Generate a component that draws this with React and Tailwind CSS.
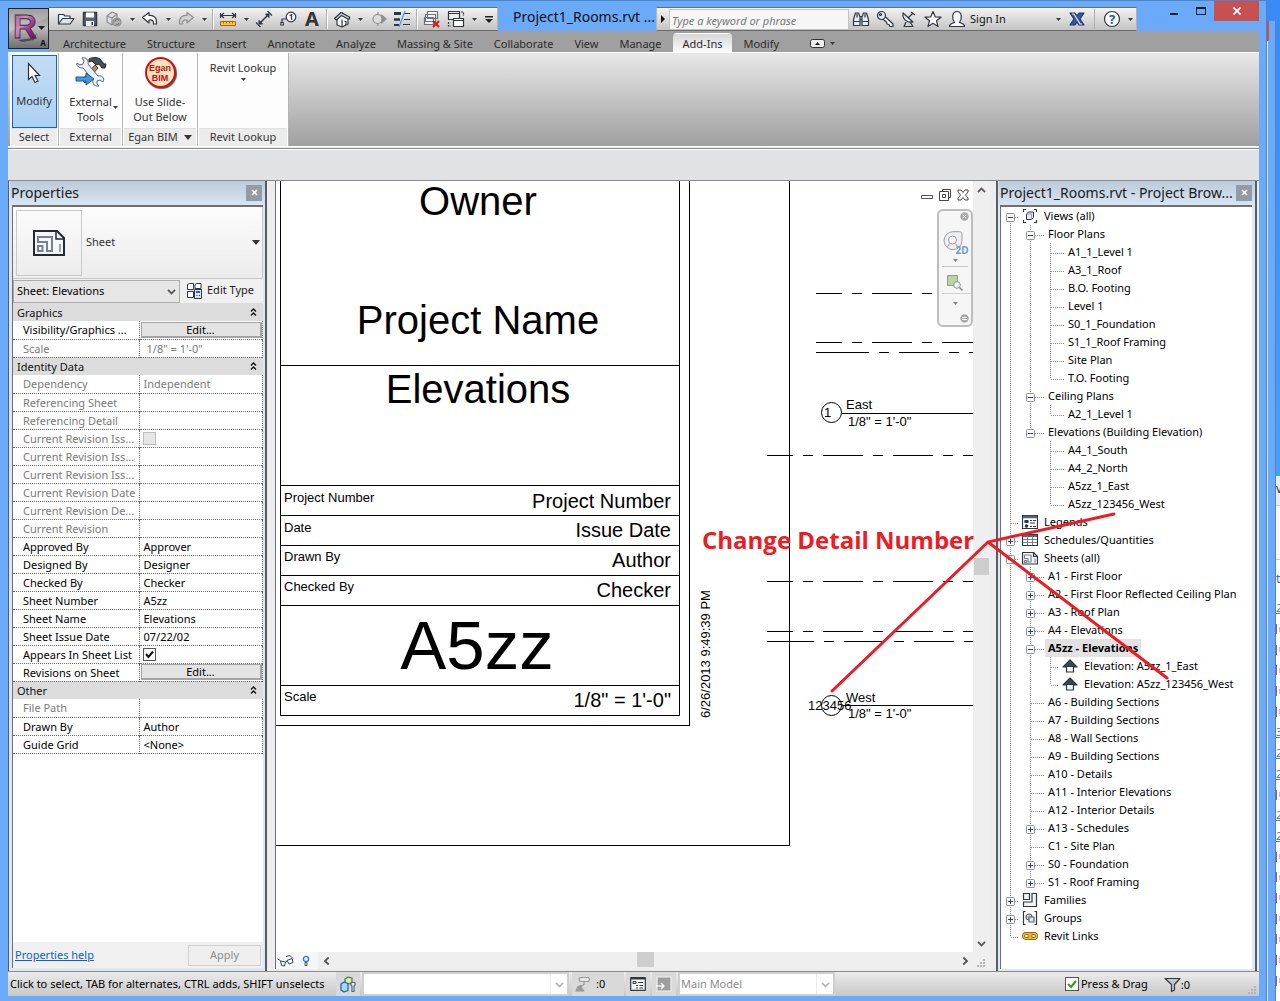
import React, { useState } from 'react';
import clsx from 'clsx';

const TABS = ['Architecture', 'Structure', 'Insert', 'Annotate', 'Analyze', 'Massing & Site', 'Collaborate', 'View', 'Manage', 'Add-Ins', 'Modify'];

const PROPERTY_GROUPS = [
  {
    name: 'Graphics',
    rows: [
      { label: 'Visibility/Graphics ...', type: 'button' },
      { label: 'Scale', value: '1/8" = 1\'-0"', muted: true, indent: true },
    ],
  },
  {
    name: 'Identity Data',
    rows: [
      { label: 'Dependency', value: 'Independent', muted: true },
      { label: 'Referencing Sheet', muted: true },
      { label: 'Referencing Detail', muted: true },
      { label: 'Current Revision Iss...', type: 'checkbox', muted: true },
      { label: 'Current Revision Iss...', muted: true },
      { label: 'Current Revision Iss...', muted: true },
      { label: 'Current Revision Date', muted: true },
      { label: 'Current Revision De...', muted: true },
      { label: 'Current Revision', muted: true },
      { label: 'Approved By', value: 'Approver' },
      { label: 'Designed By', value: 'Designer' },
      { label: 'Checked By', value: 'Checker' },
      { label: 'Sheet Number', value: 'A5zz' },
      { label: 'Sheet Name', value: 'Elevations' },
      { label: 'Sheet Issue Date', value: '07/22/02' },
      { label: 'Appears In Sheet List', type: 'checkbox', checked: true },
      { label: 'Revisions on Sheet', type: 'button' },
    ],
  },
  {
    name: 'Other',
    rows: [
      { label: 'File Path', muted: true },
      { label: 'Drawn By', value: 'Author' },
      { label: 'Guide Grid', value: '<None>' },
    ],
  },
];

const leaf = (label) => ({ label });
const closed = (label) => ({ label, box: '+' });

const TREE = [
  {
    label: 'Views (all)', icon: 'views', box: '-',
    children: [
      {
        label: 'Floor Plans', box: '-',
        children: ['A1_1_Level 1', 'A3_1_Roof', 'B.O. Footing', 'Level 1', 'S0_1_Foundation', 'S1_1_Roof Framing', 'Site Plan', 'T.O. Footing'].map(leaf),
      },
      { label: 'Ceiling Plans', box: '-', children: [leaf('A2_1_Level 1')] },
      {
        label: 'Elevations (Building Elevation)', box: '-',
        children: ['A4_1_South', 'A4_2_North', 'A5zz_1_East', 'A5zz_123456_West'].map(leaf),
      },
    ],
  },
  { label: 'Legends', icon: 'legend' },
  { label: 'Schedules/Quantities', icon: 'schedule', box: '+' },
  {
    label: 'Sheets (all)', icon: 'sheet', box: '-',
    children: [
      closed('A1 - First Floor'),
      closed('A2 - First Floor Reflected Ceiling Plan'),
      closed('A3 - Roof Plan'),
      closed('A4 - Elevations'),
      {
        label: 'A5zz - Elevations', box: '-', active: true,
        children: [
          { label: 'Elevation: A5zz_1_East', icon: 'elevation' },
          { label: 'Elevation: A5zz_123456_West', icon: 'elevation' },
        ],
      },
      leaf('A6 - Building Sections'),
      leaf('A7 - Building Sections'),
      leaf('A8 - Wall Sections'),
      leaf('A9 - Building Sections'),
      leaf('A10 - Details'),
      leaf('A11 - Interior Elevations'),
      leaf('A12 - Interior Details'),
      closed('A13 - Schedules'),
      leaf('C1 - Site Plan'),
      closed('S0 - Foundation'),
      closed('S1 - Roof Framing'),
    ],
  },
  { label: 'Families', icon: 'family', box: '+' },
  { label: 'Groups', icon: 'group', box: '+' },
  { label: 'Revit Links', icon: 'link' },
];

/* ---------- icons ---------- */

const DARK = '#2f3740';

function Icon({ size = 18, box = 18, children, className }) {
  return (
    <svg width={size} height={size} viewBox={`0 0 ${box} ${box}`} fill="none" stroke={DARK} strokeWidth="1.2" strokeLinejoin="round" className={clsx('block shrink-0', className)} aria-hidden="true">
      {children}
    </svg>
  );
}

const OpenIcon = () => (
  <Icon>
    <path d="M1.500 14V4.500h5l1.500 1.500h5v2.500" fill="#f5f7fa" />
    <path d="M1.500 14l4-5.500h11.500l-4 5.500z" fill="#dfe4ea" />
  </Icon>
);
const SaveIcon = () => (
  <Icon>
    <path d="M2.500 2.500h13v13h-13z" fill="#59636f" strokeWidth="1.500" />
    <path d="M5 2.500h8v5h-8z" fill="#fff" stroke="none" />
    <path d="M5 11h8v5h-8z" fill="#eef1f4" stroke="none" />
    <path d="M10.500 12h1.500v3h-1.500z" fill={DARK} stroke="none" />
  </Icon>
);
const SyncIcon = () => (
  <Icon>
    <g stroke="#8a8d90">
      <path d="M2 6l5-4 5 2v7l-5 4-5-3zM2 6l5 2 5-4M7 8v7" fill="#dcdcdc" />
      <circle cx="12" cy="12" r="4" fill="#b4b4b4" />
      <path d="M10 12a2 2 0 0 1 4-1M14 13a2 2 0 0 1-3 1" stroke="#777" />
    </g>
  </Icon>
);
const UndoIcon = () => (
  <Icon><path d="M1.500 7.500L8 2.500v3c5-.5 8 2 7.500 8.500h-3c.5-3-1-4.500-4.500-4v3z" fill="#fff" /></Icon>
);
const RedoIcon = () => (
  <Icon><path d="M16.500 7.500L10 2.500v3C5 5 2 7.500 2.500 14h3c-.5-3 1-4.500 4.500-4v3z" fill="#d4d4d4" stroke="#8e8e8e" /></Icon>
);
const MeasureIcon = () => (
  <Icon>
    <path d="M2 5.500h14M5 3L2 5.500 5 8M13 3l3 2.500L13 8M1.500 3v5M16.500 3v5" />
    <path d="M1.500 11.500h15v4h-15z" fill="#ffc73c" stroke="#a56b00" strokeWidth="1" />
    <path d="M4.500 11.500v2M7.500 11.500v2M10.500 11.500v2M13.500 11.500v2" stroke="#a56b00" strokeWidth="1" />
  </Icon>
);
const DimensionIcon = () => (
  <Icon>
    <path d="M5 13L13 5" strokeWidth="1.500" />
    <path d="M4 10.500V14h3.500zM14 7.500V4h-3.500z" fill={DARK} strokeWidth="1" />
    <path d="M1 12.500l4.500 4.500M12.500 1l4.500 4.500" />
  </Icon>
);
const TagIcon = () => (
  <Icon>
    <circle cx="12" cy="7" r="4.800" fill="#fff" />
    <path d="M7 9H3v5" />
    <path d="M1.800 12.500h2.500V15H1.800z" fill="#fff" />
    <text x="12" y="10" fontSize="8" fontWeight="700" textAnchor="middle" fill={DARK} stroke="none">1</text>
  </Icon>
);
const HouseIcon = () => (
  <Icon>
    <path d="M4 8v7l5 2 6-3V8L9.500 3z" fill="#fff" />
    <path d="M1.500 8.500L8 2.500l8.500 4.500v2L14 8.500 8.500 5.500 3.500 10z" fill="#c9d2dc" />
    <path d="M9 9.500v7.500M11.500 11.500h1.500v3.500" />
  </Icon>
);
const SectionIcon = () => (
  <Icon>
    <path d="M9 2v14M12.500 5l4.500 4-4.500 4z" fill="#8e8e8e" stroke="#8e8e8e" />
    <circle cx="8.500" cy="9" r="4.500" fill="#ddd" stroke="#8e8e8e" />
  </Icon>
);
const ThinLinesIcon = () => (
  <Icon>
    <path d="M1 3.500h7" strokeWidth="3" />
    <path d="M1 9.500h6" strokeWidth="2.500" />
    <path d="M1 15h5" strokeWidth="2" />
    <path d="M11 3.500h6M11 9.500h6M10 14.500h7" />
    <path d="M12 1L6 17" stroke="#3a9be8" />
  </Icon>
);
const CloseHiddenIcon = () => (
  <Icon>
    <path d="M4.500 1.500h10v7h-10zM2.500 4.500h10v7h-10zM1.500 7.500h9v7h-9z" fill="#f6f6f6" stroke="#6b7178" />
    <path d="M10 11l6 6M16 11l-6 6" stroke="#d01818" strokeWidth="2" />
  </Icon>
);
const SwitchIcon = () => (
  <Icon>
    <path d="M1.500 1.500h11v8h-11zM1.500 3.500h11" fill="#eee" />
    <path d="M6.500 8.500h10v8h-10zM6.500 10.500h10" fill="#fff" />
    <path d="M14 2h2.500v4M1.500 12v4H4" strokeDasharray="2 1" />
  </Icon>
);
const BinocularsIcon = () => (
  <Icon>
    <path d="M1.500 9.500L3.500 3h3L8 7v8.500H1.500zM16.500 9.500L14.500 3h-3L10 7v8.500h6.500z" fill="#e8ecf0" />
    <path d="M8 6.500h2M8 9.500h2M2 11.500h6M10 11.500h6M5 3.500v4M13 3.500v4" />
  </Icon>
);
const KeyIcon = () => (
  <Icon>
    <path d="M8.500 6L17 14v2.500h-3l-1-2-2-.5-.5-2L6 8.500" fill="#fff" />
    <circle cx="5.500" cy="5.500" r="4" fill="#e4e8ec" />
    <circle cx="4.500" cy="4.500" r="1" />
  </Icon>
);
const DishIcon = () => (
  <Icon>
    <path d="M3 3c-1 6 4 10 10 9z" fill="#e8ecf0" />
    <path d="M8 8l5-5M11 2l4 3M6 12l-2 4.500h9L10 12" />
  </Icon>
);
const StarIcon = () => (
  <Icon><path d="M9 1.500l2.200 5.300 5.800.4-4.500 3.600 1.500 5.700-5-3.200-5 3.200 1.500-5.700L1 7.200l5.800-.4z" fill="#fff" /></Icon>
);
const UserIcon = () => (
  <Icon>
    <path d="M1.500 16.500c0-3 2.500-3 5-4-3-4-2.500-11 2.500-11s5.500 7 2.500 11c2.500 1 5 1 5 4z" fill="#f4f6f8" />
  </Icon>
);
const ExchangeIcon = () => (
  <Icon>
    <path d="M2 3h5l2 3 2-3h5l-4 6 4 6h-5l-2-3-2 3H2l4-6z" fill="#3558a8" stroke="#1e3568" />
    <path d="M4 4h2l6 10h2" stroke="#e8eefb" />
  </Icon>
);
const HelpIcon = () => (
  <Icon>
    <circle cx="9" cy="9" r="7.500" fill="#fff" />
    <text x="9" y="14" fontSize="13" fontWeight="700" textAnchor="middle" fill="#1c55b8" stroke="none">?</text>
  </Icon>
);
const Caret = ({ className }) => (
  <svg width="5" height="3" viewBox="0 0 5 3" className={clsx('block shrink-0', className)} aria-hidden="true"><path d="M0 0h5L2.500 3z" fill="#3b3b3b" /></svg>
);
const Chevron = ({ className, color = '#555' }) => (
  <svg width="9" height="6" viewBox="0 0 9 6" fill="none" className={clsx('block shrink-0', className)} aria-hidden="true"><path d="M1 .8l3.500 3.700L8 .8" stroke={color} strokeWidth="1.800" /></svg>
);
const CloseX = () => (
  <svg width="7" height="7" viewBox="0 0 7 7" aria-hidden="true"><path d="M1 1l5 5M6 1L1 6" stroke="#fff" strokeWidth="1.600" /></svg>
);

const TREE_ICONS = {
  views: (
    <Icon size={16} box={16}>
      <path d="M4 1.500H1.500V4M12 1.500h2.500V4M4 14.500H1.500V12M12 14.500h2.500V12" />
      <path d="M4.500 6l2-2h5v5.500l-2 2h-5z" fill="#e4e8ee" strokeWidth="1" />
      <path d="M4.500 6h5v5.500" stroke="#9aa4af" strokeWidth="1" />
    </Icon>
  ),
  legend: (
    <Icon size={16} box={16}>
      <path d="M.5 1.500h15v13H.5z" fill="#fff" />
      <path d="M1 3h14" strokeWidth="2.500" stroke="#59636f" />
      <path d="M3 6.500h3v2H3z" fill={DARK} />
      <path d="M8 6.500h2M11 6.500h3M8 9h5M8 12.500h2M11 12.500h3" />
      <circle cx="4.500" cy="12" r="1.200" fill={DARK} />
    </Icon>
  ),
  schedule: (
    <Icon size={16} box={16}>
      <path d="M.5 2.500h15v11H.5z" fill="#fff" />
      <path d="M1 4h14" strokeWidth="2" stroke="#59636f" />
      <path d="M1 7.500h14M1 10.500h14M5.500 4v9M10.500 4v9" strokeWidth="1" stroke="#7b8592" />
    </Icon>
  ),
  sheet: (
    <Icon size={16} box={16}>
      <path d="M.5 2.500h11l4 4v7.500H.5z" fill="#f4f6f8" />
      <path d="M11.500 2.500v4h4" />
      <path d="M2.500 5h6.500v7H6V8.500H2.500zM2.500 10.500h2v2h-2zM13 8.500v4" stroke="#7b8592" />
    </Icon>
  ),
  elevation: (
    <Icon size={16} box={16}>
      <path d="M8 2L1 9h14z" fill="#3d4650" />
      <path d="M4.500 8.500h7v5.500h-7z" fill="#f2f4f6" />
    </Icon>
  ),
  family: (
    <Icon size={16} box={16}>
      <path d="M1.500 1.500h6v6h-6zM10 1.500h4.500v13h-13V10H10z" fill="#f0f2f5" />
    </Icon>
  ),
  group: (
    <Icon size={16} box={16}>
      <path d="M3.500 1.500h-2v13h2M12.500 1.500h2v13h-2" />
      <circle cx="7" cy="7" r="3" fill="#c7ced8" stroke="#59636f" />
      <path d="M7 7h5v5H7z" fill="#e4e8ee" stroke="#59636f" />
    </Icon>
  ),
  link: (
    <Icon size={16} box={16}>
      <rect x="1.500" y="5.500" width="7.500" height="5" rx="2.500" stroke="#7a5200" strokeWidth="2.800" />
      <rect x="7" y="5.500" width="7.500" height="5" rx="2.500" stroke="#7a5200" strokeWidth="2.800" />
      <rect x="1.500" y="5.500" width="7.500" height="5" rx="2.500" stroke="#f6bb2e" strokeWidth="1.400" />
      <rect x="7" y="5.500" width="7.500" height="5" rx="2.500" stroke="#f6bb2e" strokeWidth="1.400" />
    </Icon>
  ),
};

/* ---------- header ---------- */

function BarButton({ label, children }) {
  return (
    <button type="button" aria-label={label} className="flex h-full w-6 shrink-0 items-center justify-center">
      {children}
    </button>
  );
}

function DropButton({ label }) {
  return (
    <button type="button" aria-label={label} className="flex h-full w-3 shrink-0 items-center justify-center">
      <Caret />
    </button>
  );
}

const Separator = () => <div className="mx-[2px] box-content h-5 w-px shrink-0 border-r border-r-white bg-[#b0b0b0]" />;

function QuickAccess() {
  return (
    <div className="flex h-6 items-center border border-l-0 border-[#6b6b6b] border-r-[#b5b5b5] bg-gradient-to-b from-[#f3f3f3] to-[#c4c4c4] pl-[5px]">
      <BarButton label="Open"><OpenIcon /></BarButton>
      <BarButton label="Save"><SaveIcon /></BarButton>
      <BarButton label="Synchronize"><SyncIcon /></BarButton>
      <DropButton label="Synchronize options" />
      <BarButton label="Undo"><UndoIcon /></BarButton>
      <DropButton label="Undo list" />
      <BarButton label="Redo"><RedoIcon /></BarButton>
      <DropButton label="Redo list" />
      <Separator />
      <BarButton label="Measure"><MeasureIcon /></BarButton>
      <DropButton label="Measure options" />
      <BarButton label="Aligned dimension"><DimensionIcon /></BarButton>
      <BarButton label="Tag by category"><TagIcon /></BarButton>
      <button type="button" className="h-full w-6 text-center text-[20px] leading-[22px] font-bold text-[#333]">A</button>
      <Separator />
      <BarButton label="3D view"><HouseIcon /></BarButton>
      <DropButton label="3D options" />
      <BarButton label="Section"><SectionIcon /></BarButton>
      <BarButton label="Thin lines"><ThinLinesIcon /></BarButton>
      <Separator />
      <BarButton label="Close hidden windows"><CloseHiddenIcon /></BarButton>
      <BarButton label="Switch windows"><SwitchIcon /></BarButton>
      <DropButton label="Window list" />
      <button type="button" aria-label="Customize" className="flex h-full w-[17px] items-center justify-center">
        <svg width="8" height="7" viewBox="0 0 8 7" aria-hidden="true"><path d="M0 0h8v1.500H0zM0 3h8L4 7z" fill="#222" /></svg>
      </button>
    </div>
  );
}

function InfoCenter() {
  return (
    <div className="flex h-6 shrink-0 items-center border border-[#6b6b6b] border-r-[#b5b5b5] border-l-[#b5b5b5] bg-gradient-to-b from-[#f3f3f3] to-[#c4c4c4]">
      <button type="button" aria-label="Toggle search" className="flex h-full w-3 items-center justify-center">
        <svg width="4" height="8" viewBox="0 0 4 8" aria-hidden="true"><path d="M0 0l4 4-4 4z" fill="#111" /></svg>
      </button>
      <input
        type="text"
        aria-label="Search"
        placeholder="Type a keyword or phrase"
        className="h-[21px] w-[180px] border border-[#c3c3c3] bg-[#f6f6f6] px-[2px] pt-[2px] text-[11px] text-black placeholder:text-[#777] placeholder:italic focus:outline-none"
      />
      <BarButton label="Find"><BinocularsIcon /></BarButton>
      <BarButton label="Subscription"><KeyIcon /></BarButton>
      <BarButton label="Communication"><DishIcon /></BarButton>
      <BarButton label="Favorites"><StarIcon /></BarButton>
      <BarButton label="Account"><UserIcon /></BarButton>
      <button type="button" className="flex h-full w-24 items-center justify-between pr-1 pl-px text-left text-[11px] text-[#111]">
        Sign In
        <Caret />
      </button>
      <BarButton label="Exchange apps"><ExchangeIcon /></BarButton>
      <div className="mx-[5px] h-5 w-px bg-[#b0b0b0]" />
      <BarButton label="Help"><HelpIcon /></BarButton>
      <DropButton label="Help options" />
    </div>
  );
}

function WindowButtons() {
  return (
    <div className="ml-auto flex h-5 shrink-0 self-start">
      <button type="button" aria-label="Minimize" className="flex w-[26px] items-center justify-center">
        <span className="mt-[5px] h-[2px] w-2 bg-[#222]" />
      </button>
      <button type="button" aria-label="Maximize" className="flex w-[27px] items-center justify-center">
        <span className="h-2 w-[10px] border border-t-2 border-[#222]" />
      </button>
      <button type="button" aria-label="Close" className="flex w-[45px] items-center justify-center bg-[#c75050]">
        <svg width="8" height="8" viewBox="0 0 8 8" aria-hidden="true"><path d="M.5.5l7 7M7.500.5l-7 7" stroke="#fff" strokeWidth="1.700" /></svg>
      </button>
    </div>
  );
}

function AppButton() {
  return (
    <button type="button" aria-label="Application menu" className="mt-[7px] h-[41px] w-[41px] shrink-0 border border-[#222] bg-gradient-to-b from-[#8a8a8a] via-[#b9b9b9] to-[#6e6e6e]">
      <svg width="39" height="39" viewBox="0 0 39 39" aria-hidden="true">
        <defs>
          <linearGradient id="logo" x1="0" y1="0" x2="1" y2="1">
            <stop offset="0" stopColor="#8d5a88" />
            <stop offset=".4" stopColor="#c88fc2" />
            <stop offset=".65" stopColor="#8a2f82" />
            <stop offset="1" stopColor="#4c0a46" />
          </linearGradient>
        </defs>
        <path d="M0 39V24C12 12 26 16 39 8V0H0z" fill="#fff" opacity=".18" />
        <path d="M9 31l15-2 4-5-3 7-12 2z" fill="#2c1a2a" opacity=".6" />
        <text x="4" y="29" fontSize="33" fontWeight="700" fontFamily="Liberation Sans, Arial, sans-serif" fill="url(#logo)" stroke="#4f1f49" strokeWidth=".8">R</text>
        <path d="M29 17h7l-3.500 4z" fill="#1c2530" />
        <text x="34" y="37" fontSize="8" fontWeight="700" textAnchor="middle" fill="#111">A</text>
      </svg>
    </button>
  );
}

function Header() {
  return (
    <header className="flex">
      <AppButton />
      <div className="min-w-0 flex-1">
        <div className="flex h-[30px]">
          <div className="flex shrink-0 items-end"><QuickAccess /></div>
          <h1 className="w-[158px] shrink-0 self-end pb-[4px] pl-[14px] text-center text-[14px] leading-5 whitespace-nowrap text-[#111]">Project1_Rooms.rvt ...</h1>
          <div className="flex items-end"><InfoCenter /></div>
          <WindowButtons />
        </div>
        <nav className="flex h-[21px] items-end gap-px bg-[#a0a0a0] pl-1">
          {TABS.map((tab) => (
            <button
              key={tab}
              type="button"
              className={clsx(
                'h-[18px] px-[10px] text-[11px] leading-[17px] whitespace-nowrap text-[#2b2b2b]',
                tab === 'Add-Ins' && 'rounded-t-sm bg-gradient-to-b from-[#d8d8d8] to-[#fbfbfb] shadow-[0_-1px_0_#fff]'
              )}
            >
              {tab}
            </button>
          ))}
          <button type="button" aria-label="Ribbon display" className="ml-5 flex h-[17px] items-center gap-[5px]">
            <svg width="15" height="9" viewBox="0 0 15 9" aria-hidden="true">
              <rect x=".5" y=".5" width="14" height="8" rx="2" fill="#eee" stroke="#333" />
              <path d="M5 6h5L7.500 3z" fill="#222" />
            </svg>
            <Caret />
          </button>
        </nav>
      </div>
    </header>
  );
}

/* ---------- ribbon ---------- */

function RibbonPanel({ title, width, more, children }) {
  return (
    <section className={clsx('flex flex-col border-r border-[#b4b4b4] bg-[#fdfdfd] px-px', width)}>
      <div className="flex flex-1 justify-center pt-[2px]">{children}</div>
      <div className="flex h-[18px] items-center justify-center gap-[6px] border-t border-[#e0e0e0] bg-[#ececec] text-[11px] whitespace-nowrap text-[#333]">
        {title}
        {more && <svg width="8" height="5" viewBox="0 0 8 5" aria-hidden="true"><path d="M0 0h8L4 5z" fill="#333" /></svg>}
      </div>
    </section>
  );
}

function Ribbon() {
  return (
    <div className="bg-white">
      <div className="flex h-[94px] border-t border-white bg-gradient-to-b from-[#e8e8e8] to-[#a0a0a0] pl-[2px]">
        <RibbonPanel title="Select" width="w-[49px]">
          <button type="button" className="flex h-[73px] w-[45px] flex-col items-center border border-[#1565c0] bg-gradient-to-b from-[#c3dbf3] to-[#acd2f4] text-[11px] text-[#333]">
            <svg width="16" height="22" viewBox="0 0 16 22" className="mt-[6px]" aria-hidden="true">
              <path d="M2.500 1.500v16l3.500-3 3 6 3-1.500-3-5.500h4.500z" fill="#fff" stroke="#333" strokeWidth="1.200" />
            </svg>
            <span className="mt-[9px] leading-4">Modify</span>
          </button>
        </RibbonPanel>
        <RibbonPanel title="External" width="w-[64px]">
          <button type="button" className="relative flex w-full flex-col items-center text-[11px] leading-[15px] text-[#333]">
            <svg width="32" height="32" viewBox="0 0 32 32" className="mt-px" aria-hidden="true">
              <path d="M7 24L20 9l3 3L10 27z" fill="#b58a7c" stroke="#5b3a30" />
              <path d="M14 3c4-2 8-2 11 0l4 5 2 0-1 4-3 0-3-4-3 1-4-4-3 1z" fill="#4a4f55" stroke="#22262b" />
              <path d="M2 7l3 2 3-1 1-3-2-3c4-1 7 2 6 6l10 12c4-1 7 2 5 6l-3-2-3 1 0 3 2 2c-4 1-7-2-6-6L8 12c-4 0-7-2-6-5z" fill="#eef2f5" stroke="#59636f" />
              <path d="M1 21h10v-4l8 6-8 6v-4H1z" fill="#3f98e0" stroke="#1c5c9c" />
            </svg>
            <span className="mt-[6px]">External</span>
            <span>Tools</span>
            <Caret className="absolute right-[3px] bottom-[19px]" />
          </button>
        </RibbonPanel>
        <RibbonPanel title="Egan BIM" width="w-[75px]" more>
          <button type="button" className="flex flex-col items-center text-[11px] leading-[15px] text-[#333]">
            <span className="mt-[2px] flex h-[31px] w-[31px] flex-col items-center justify-center rounded-full border-2 border-[#cc1414] bg-[#fde3c0] font-['Liberation_Sans',sans-serif] text-[9px] leading-[10px] font-bold text-[#c00f0f] shadow-[1px_1px_1px_#555]">
              <span>Egan</span>
              <span>BIM</span>
            </span>
            <span className="mt-[6px]">Use Slide-</span>
            <span>Out Below</span>
          </button>
        </RibbonPanel>
        <RibbonPanel title="Revit Lookup" width="w-[91px]">
          <button type="button" className="flex flex-col items-center self-start pt-[5px] text-[11px] leading-[15px] text-[#333]">
            Revit Lookup
            <Caret className="mt-[3px]" />
          </button>
        </RibbonPanel>
      </div>
      <div className="mt-px h-[2px] border-b border-[#8e8e8e] bg-[#e8e8e8]" />
      <div className="mt-px h-[31px] border-b border-[#8a8a8a] bg-[#e0e2e4]" />
    </div>
  );
}

/* ---------- side panels ---------- */

function PanelTitle({ children }) {
  return (
    <div className="flex h-6 items-center justify-between bg-gradient-to-b from-[#bccbda] to-[#d8e5f3] pr-[3px] pl-px">
      <h2 className="text-[14px] leading-6 whitespace-nowrap text-[#1b1b1b]">{children}</h2>
      <button type="button" aria-label="Close panel" className="mb-px flex h-4 w-4 shrink-0 items-center justify-center bg-[#919ba6]"><CloseX /></button>
    </div>
  );
}

function PropertyRow({ row }) {
  const [checked, setChecked] = useState(!!row.checked);
  const tone = row.muted ? 'text-[#7b7b7b]' : 'text-black';
  return (
    <tr className="h-[18px] border-b border-dotted border-[#6d6d6d]">
      <th scope="row" className={clsx('overflow-hidden border-r border-dotted border-[#6d6d6d] p-0 pl-[10px] text-left font-normal whitespace-nowrap', tone)}>{row.label}</th>
      <td className={clsx('border-r border-dotted border-[#6d6d6d] p-0 whitespace-nowrap', tone, !row.type && (row.indent ? 'pl-[7px]' : 'pl-1'))}>
        {row.type === 'button' && (
          <button type="button" className="ml-px block h-4 w-[121px] border border-r-2 border-b-2 border-[#a3a3a3] bg-[#e3e3e3] text-center leading-[14px]">Edit...</button>
        )}
        {row.type === 'checkbox' && (
          <span className="relative ml-[3px] block h-[13px] w-[13px]">
            <input
              type="checkbox"
              aria-label={row.label}
              checked={checked}
              disabled={row.muted}
              onChange={(e) => setChecked(e.target.checked)}
              className="block h-[13px] w-[13px] appearance-none border border-[#555] bg-white disabled:border-[#bcbcbc] disabled:bg-[#e6e6e6]"
            />
            {checked && (
              <svg width="13" height="13" viewBox="0 0 13 13" className="pointer-events-none absolute inset-0" aria-hidden="true"><path d="M3 6l2.500 3L10 3.500" fill="none" stroke="#111" strokeWidth="2" /></svg>
            )}
          </span>
        )}
        {row.value}
      </td>
    </tr>
  );
}

function PropertiesPanel() {
  return (
    <aside className="flex w-[259px] shrink-0 flex-col border-r-2 border-l border-[#565d66] bg-[#dfe8f2] pb-[3px] pl-px">
      <PanelTitle>Properties</PanelTitle>
      <div className="mr-[2px] ml-[2px] flex flex-1 flex-col border-t-2 border-l border-[#6f6f6f] bg-[#f0f0f0]">
        <button type="button" className="flex h-[72px] items-center border-r border-b border-[#c8c8c8] bg-gradient-to-b from-[#fcfcfc] to-[#ececec] py-[2px] pr-[2px] pl-[3px] text-[11px] text-[#333]">
          <span className="flex h-[66px] w-[66px] items-center justify-center border border-[#c9c9c9]">
            <svg width="32" height="26" viewBox="0 0 32 26" fill="none" aria-hidden="true">
              <path d="M1 1h23l7 7v17H1z" fill="#f4f6f8" stroke="#222a33" strokeWidth="2" />
              <path d="M23 1v8h8" stroke="#222a33" strokeWidth="1.500" />
              <path d="M5 7h14v14h-5v-9H5zM5 16h4.500v5H5z" stroke="#76828f" strokeWidth="2" />
              <path d="M27 14v8" stroke="#9aa2ab" strokeWidth="2" />
            </svg>
          </span>
          <span className="ml-1">Sheet</span>
          <svg width="8" height="5" viewBox="0 0 8 5" className="ml-auto" aria-hidden="true"><path d="M0 0h8L4 5z" fill="#333" /></svg>
        </button>
        <div className="flex h-6 items-center">
          <label className="relative mt-px block">
            <select aria-label="Selection filter" className="block h-[23px] w-[167px] appearance-none border border-[#acacac] bg-[#e6e6e6] pl-[3px] text-[11px] text-black">
              <option>Sheet: Elevations</option>
            </select>
            <Chevron className="pointer-events-none absolute top-[9px] right-1" />
          </label>
          <button type="button" className="mb-[2px] ml-[6px] flex items-center gap-1 text-[11px] text-[#222]">
            <Icon size={17} box={17}>
              <path d="M1.500 2.500l2-1h4v6h-6zM9 2.500l2-1h4v5H9zM1.500 9.500h6v6h-6z" fill="#fff" strokeWidth="1" />
              <path d="M8.500 7.500h7v9h-7z" fill="#dfe6ee" strokeWidth="1" />
              <path d="M10 9h4v2h-4z" fill="#1c62b5" stroke="none" />
              <path d="M10.500 13.500h1M13 13.500h1" strokeWidth="1" />
            </Icon>
            Edit Type
          </button>
        </div>
        <div className="flex-1 bg-white">
          <table className="w-full table-fixed border-collapse text-[11px] leading-[15px]">
            <colgroup>
              <col className="w-[126px]" />
              <col />
            </colgroup>
            {PROPERTY_GROUPS.map((group) => (
              <tbody key={group.name}>
                <tr className="h-[18px] bg-[#dcdcdc]">
                  <th colSpan={2} className="p-0 pr-[6px] pl-1 text-left font-normal text-[#111]">
                    <span className="flex items-center justify-between">
                      {group.name}
                      <svg width="7" height="8" viewBox="0 0 7 8" fill="none" aria-hidden="true"><path d="M1 3.500L3.500 1 6 3.500M1 7.500L3.500 5 6 7.500" stroke="#111" strokeWidth="1.300" /></svg>
                    </span>
                  </th>
                </tr>
                {group.rows.map((row, i) => <PropertyRow key={i} row={row} />)}
              </tbody>
            ))}
          </table>
        </div>
        <div className="flex h-[26px] items-center justify-between pr-[2px] pl-[2px] text-[11px]">
          <a href="#help" className="text-[#0a62c9] underline">Properties help</a>
          <button type="button" disabled className="h-[21px] w-[73px] border border-[#d0d0d0] bg-[#efefef] text-[#8d8d8d]">Apply</button>
        </div>
      </div>
    </aside>
  );
}

// One row cell with the dotted branch line and the optional +/- box.
function Branch({ box, first, last, long }) {
  const width = long ? 25 : 20;
  return (
    <svg width={width} height="18" viewBox={`0 0 ${width} 18`} className="block shrink-0" fill="none" aria-hidden="true">
      <path d={`M9.500 ${first ? 10 : 0}V${last ? 10 : 18}`} stroke="#8f8f8f" strokeDasharray="1 1" />
      <path d={`M10 10.500H${width - 2}`} stroke="#8f8f8f" strokeDasharray="1 1" />
      {box && (
        <>
          <rect x="5.500" y="6.500" width="8" height="8" rx="1" fill="#fafafa" stroke="#919191" />
          <path d={box === '+' ? 'M7 10.500h5M9.500 8v5' : 'M7 10.500h5'} stroke="#2b3f8f" />
        </>
      )}
    </svg>
  );
}

function Guide({ line }) {
  return (
    <svg width="20" height="18" viewBox="0 0 20 18" className="block shrink-0" aria-hidden="true">
      {line && <path d="M9.500 0v18" stroke="#8f8f8f" strokeDasharray="1 1" />}
    </svg>
  );
}

function TreeNodes({ nodes, guides = [] }) {
  return (
    <ul>
      {nodes.map((node, i) => {
        const last = i === nodes.length - 1;
        return (
          <li key={node.label}>
            <div className="flex h-[18px] items-center">
              {guides.map((line, g) => <Guide key={g} line={line} />)}
              <Branch box={node.box} first={i === 0 && guides.length === 0} last={last} long={!node.icon} />
              {node.icon && <span className="ml-px">{TREE_ICONS[node.icon]}</span>}
              <span
                className={clsx(
                  'leading-[18px] whitespace-nowrap text-black',
                  node.icon ? 'ml-[6px]' : '-ml-px px-[3px]',
                  node.active && 'bg-[#e2e2e2] font-bold'
                )}
              >
                {node.label}
              </span>
            </div>
            {node.children && <TreeNodes nodes={node.children} guides={[...guides, !last]} />}
          </li>
        );
      })}
    </ul>
  );
}

function ProjectBrowser() {
  return (
    <aside className="mr-[2px] flex w-[261px] shrink-0 flex-col border-r-2 border-l-2 border-[#565d66] bg-[#dfe8f2] pb-[2px] pl-px">
      <PanelTitle>Project1_Rooms.rvt - Project Brow...</PanelTitle>
      <div className="mr-[3px] ml-px flex-1 overflow-hidden border-t-2 border-l border-[#6f6f6f] bg-white text-[11px]">
        <TreeNodes nodes={TREE} />
      </div>
    </aside>
  );
}

/* ---------- drawing area ---------- */

function SheetDrawing() {
  return (
    <svg className="absolute inset-0 h-full w-full" fontFamily="Liberation Sans, Arial, sans-serif" fill="#000">
      <g transform="translate(-276 -181)">
        <g fill="none" stroke="#000" shapeRendering="crispEdges">
          <path d="M280.500 181V715.500H679.500V181M689.500 181V725.500H276M789.500 181V845.500H276" />
          <path d="M280 365.500H679M280 485.500H679M280 515.500H679M280 545.500H679M280 575.500H679M280 605.500H679M280 685.500H679" />
          <path d="M816 293.500H1400M816 342.500H1400" strokeDasharray="40 10 10 10" strokeDashoffset="14" />
          <path d="M816 352.500H829" />
          <path d="M829 352.500H1400" strokeDasharray="40 10 10 10" />
          <path d="M767 455.500H1400M767 581.500H1400M767 631.500H1400" strokeDasharray="40 10 10 10" strokeDashoffset="14" />
          <path d="M767 641.500H774" />
          <path d="M774 641.500H1400" strokeDasharray="40 10 10 10" />
          <path d="M842 413.500H1400M842 705.500H1400" />
        </g>
        <circle cx="831.500" cy="412.500" r="10" fill="none" stroke="#000" />
        <circle cx="831.500" cy="705.500" r="10" fill="none" stroke="#000" />
        <g fontSize="40" textAnchor="middle">
          <text x="478" y="215">Owner</text>
          <text x="478" y="334">Project Name</text>
          <text x="478" y="403">Elevations</text>
          <text x="477" y="669" fontSize="69">A5zz</text>
        </g>
        <g fontSize="20" textAnchor="end">
          <text x="671" y="508">Project Number</text>
          <text x="671" y="537">Issue Date</text>
          <text x="671" y="567">Author</text>
          <text x="671" y="597">Checker</text>
          <text x="671" y="707">1/8" = 1'-0"</text>
        </g>
        <g fontSize="13">
          <text x="284" y="502">Project Number</text>
          <text x="284" y="532">Date</text>
          <text x="284" y="561">Drawn By</text>
          <text x="284" y="591">Checked By</text>
          <text x="284" y="701">Scale</text>
          <text x="824" y="417">1</text>
          <text x="846" y="409">East</text>
          <text x="848" y="426">1/8" = 1'-0"</text>
          <text x="808" y="710">123456</text>
          <text x="846" y="702">West</text>
          <text x="848" y="718">1/8" = 1'-0"</text>
          <text transform="translate(710 718) rotate(-90)">6/26/2013 9:49:39 PM</text>
        </g>
      </g>
    </svg>
  );
}

function NavigationBar() {
  return (
    <div className="absolute top-[28px] right-0 flex h-[118px] w-9 flex-col items-center rounded-md border-2 border-[#bdbdbd] bg-[#f5f5f5]/85">
      <button type="button" aria-label="Close navigation bar" className="mt-[1px] mr-[2px] self-end">
        <svg width="9" height="9" viewBox="0 0 9 9" className="block" aria-hidden="true"><circle cx="4.500" cy="4.500" r="4.200" fill="#aaa" /><path d="M2.800 2.800l3.400 3.400M6.200 2.800L2.800 6.200" stroke="#fff" /></svg>
      </button>
      <button type="button" className="mt-[10px] flex flex-col items-center text-[10px] leading-[10px] font-bold text-[#6f9cc6]">
        <svg width="20" height="19" viewBox="0 0 20 19" fill="none" className="mr-1 block" aria-hidden="true">
          <path d="M10 .7h6.500c1.500 0 2.500 1 2.500 2.500v6.500a9 9 0 1 1-9-9z" fill="#eceef0" stroke="#9a9ea2" />
          <circle cx="9.500" cy="9" r="4" fill="#f8f8f8" stroke="#9a9ea2" />
          <path d="M6.500 12.500l-2 3M12.500 12.500l2 3" stroke="#9a9ea2" />
        </svg>
        <span className="-mt-[5px] ml-[14px]">2D</span>
      </button>
      <Caret className="mt-1 opacity-60" />
      <div className="mt-1 h-px w-[26px] bg-[#c4c4c4]" />
      <button type="button" aria-label="Zoom in region" className="mt-2">
        <svg width="16" height="16" viewBox="0 0 16 16" fill="none" className="block" aria-hidden="true">
          <path d="M.5.5h10v10H.5z" fill="#b9d3a4" stroke="#82a86f" />
          <circle cx="10" cy="10" r="3.300" fill="#f5f5f5" stroke="#8b8f93" />
          <path d="M12.500 12.500l3 3" stroke="#8b8f93" strokeWidth="1.600" />
        </svg>
      </button>
      <Caret className="mt-[11px] opacity-60" />
      <button type="button" aria-label="Navigation bar options" className="mt-auto mr-[2px] mb-[2px] self-end">
        <svg width="9" height="9" viewBox="0 0 9 9" className="block" aria-hidden="true"><circle cx="4.500" cy="4.500" r="4.200" fill="#aaa" /><path d="M2 3.500h5M2 5.500h5" stroke="#fff" /></svg>
      </button>
    </div>
  );
}

function ViewButtons() {
  return (
    <div className="absolute top-2 right-1 flex items-center gap-[6px]">
      <button type="button" aria-label="Minimize view">
        <svg width="12" height="12" viewBox="0 0 12 12" className="block" aria-hidden="true"><path d="M.5 6.500h11v3H.5z" fill="#fff" stroke="#555" /></svg>
      </button>
      <button type="button" aria-label="Restore view">
        <svg width="12" height="12" viewBox="0 0 12 12" fill="none" className="block" aria-hidden="true"><path d="M3.500 2.500v-2h8v8h-2M.5 2.500h9v9h-9z" fill="#fff" stroke="#444" /><path d="M3.500 5.500h3v3h-3z" stroke="#444" /></svg>
      </button>
      <button type="button" aria-label="Close view">
        <svg width="12" height="12" viewBox="0 0 12 12" className="block" aria-hidden="true"><path d="M1 1h3l2 2.500L8 1h3v2L8.500 6 11 9v2H8L6 8.500 4 11H1V9l2.500-3L1 3z" fill="#fff" stroke="#444" /></svg>
      </button>
    </div>
  );
}

const Grip = ({ className }) => (
  <svg width="9" height="9" viewBox="0 0 9 9" fill="#b5b5b5" className={className} aria-hidden="true">
    <path d="M6 0h2v2H6zM6 3h2v2H6zM3 3h2v2H3zM6 6h2v2H6zM3 6h2v2H3zM0 6h2v2H0z" />
  </svg>
);

function DrawingArea() {
  return (
    <main className="mr-[6px] mb-[2px] ml-2 flex min-w-0 flex-1 flex-col border-l border-[#6f6f6f] bg-white">
      <div className="flex min-h-0 flex-1">
        <div className="relative flex-1 overflow-hidden">
          <SheetDrawing />
          <ViewButtons />
          <NavigationBar />
        </div>
        <div className="flex w-[17px] flex-col items-center bg-[#efefef]">
          <button type="button" aria-label="Scroll up" className="flex h-[18px] items-center"><Chevron className="rotate-180" /></button>
          <div className="flex w-full flex-1 flex-col items-center">
            <div className="grow-[359]" />
            <div className="h-[17px] w-[15px] bg-[#cdcdcd]" />
            <div className="grow-[360]" />
          </div>
          <button type="button" aria-label="Scroll down" className="flex h-[17px] items-center"><Chevron /></button>
        </div>
      </div>
      <div className="flex h-[17px] items-center bg-[#efefef]">
        <div className="flex h-full w-[42px] items-center justify-between bg-[#f6f6f6] pr-[8px] pl-px">
          <button type="button" aria-label="Temporary hide">
            <svg width="17" height="12" viewBox="0 0 17 12" fill="none" className="block" aria-hidden="true"><path d="M.5 4l3 1.500M3.500 6l5 1-1 4-3-.5zM10 5.500l5-2 1 4-4 1.500zM8.500 7l1.500-1M9 1.500l4-1 3 3" stroke="#3c4650" /></svg>
          </button>
          <button type="button" aria-label="Reveal hidden elements">
            <svg width="8" height="12" viewBox="0 0 8 12" fill="none" className="block" aria-hidden="true"><circle cx="4" cy="4" r="2.600" fill="#dff0ff" stroke="#2d7fd0" strokeWidth="1.400" /><path d="M3 7.500h2v3H3z" stroke="#555" /></svg>
          </button>
        </div>
        <button type="button" aria-label="Scroll left" className="flex w-4 justify-center"><Chevron className="rotate-90" /></button>
        <div className="flex h-full flex-1">
          <div className="grow-[303]" />
          <div className="h-[15px] w-[17px] bg-[#cdcdcd]" />
          <div className="grow-[303]" />
        </div>
        <button type="button" aria-label="Scroll right" className="flex w-4 justify-center"><Chevron className="-rotate-90" /></button>
        <div className="flex w-[17px] justify-center"><Grip className="mt-[5px]" /></div>
      </div>
    </main>
  );
}

/* ---------- status bar ---------- */

function StatusSelect({ label, width, value }) {
  return (
    <label className="relative block border-2 border-[#cfcfcf]">
      <select aria-label={label} disabled className={clsx('block h-5 appearance-none bg-white pl-px text-[11px] text-[#8a8a8a] opacity-100', width)}>
        <option>{value}</option>
      </select>
      <span className="pointer-events-none absolute top-0 right-0 flex h-5 w-[17px] items-center justify-center border-l border-[#ececec]"><Chevron color="#b5b5b5" className="mt-[2px]" /></span>
    </label>
  );
}

function StatusBar() {
  const [drag, setDrag] = useState(true);
  return (
    <footer className="flex h-[25px] items-center border-t border-[#8a8a8a] bg-gradient-to-b from-[#ebebeb] to-[#c8c8c8] text-[11px] whitespace-nowrap text-black">
      <p className="w-[328px] shrink-0 overflow-hidden pl-[2px]">Click to select, TAB for alternates, CTRL adds, SHIFT unselects</p>
      <button type="button" aria-label="Worksets" className="flex h-full w-6 items-center justify-center bg-[#d9d9d9]">
        <Icon size={17} box={17}>
          <path d="M5 3l3-2 4 1v5l-3 1-4-1z" fill="#cfeabf" stroke="#3b7a1f" />
          <path d="M1 8l3-2 4 1.500v7L4 16l-3-2z" fill="#a9d6f7" stroke="#1560a8" />
          <path d="M11 9V6.500h4V9l-1 1v5.500h-2V10z" fill="#f4f6f8" stroke="#4f6782" />
        </Icon>
      </button>
      <div className="ml-[2px]"><StatusSelect label="Active workset" width="w-[203px]" value="" /></div>
      <button type="button" className="ml-[3px] flex h-full w-[52px] items-center gap-[5px] bg-[#d9d9d9] pl-[3px]">
        <Icon size={16} box={16}>
          <path d="M5 1.500h8.500l1 2-1 2H5l-1-2zM9 6v2.500l-3 2" fill="#e6e6e6" stroke="#9a9a9a" />
          <path d="M1 15l2-4.500 3-1 1 3 2 2.500z" fill="#9a9a9a" stroke="#9a9a9a" />
        </Icon>
        :0
      </button>
      <button type="button" aria-label="Design options" className="ml-[2px] flex h-full w-6 items-center justify-center bg-[#d9d9d9]">
        <Icon size={16} box={16}>
          <path d="M.7 1.700h14.600v12.600H.7z" fill="#f4f6f8" />
          <path d="M1 2.500h14" strokeWidth="2" />
          <path d="M3 5.500h3v2H3zM8 6.500h5M6 9.500h2M9.500 9.500H13M6 12h2M9.500 12H13" strokeWidth="1" />
        </Icon>
      </button>
      <button type="button" aria-label="Add to set" className="ml-[2px] flex h-full w-6 items-center justify-center bg-[#d9d9d9]">
        <Icon size={16} box={16}>
          <path d="M1 1h14v14H1z" fill="#9e9e9e" stroke="#eee" />
          <path d="M0 10h7M5 7l3 3-3 3" stroke="#f4f4f4" strokeWidth="1.500" />
        </Icon>
      </button>
      <div className="ml-[2px]"><StatusSelect label="Design option" width="w-[153px]" value="Main Model" /></div>
      <label className="ml-auto flex items-center gap-[2px]">
        <span className="relative block">
          <input type="checkbox" checked={drag} onChange={(e) => setDrag(e.target.checked)} className="block h-[14px] w-[14px] appearance-none border border-[#555] bg-white" />
          {drag && <svg width="14" height="14" viewBox="0 0 14 14" className="pointer-events-none absolute inset-0" aria-hidden="true"><path d="M3 7l3 3 5-6" fill="none" stroke="#2f9a1c" strokeWidth="2" /></svg>}
        </span>
        Press &amp; Drag
      </label>
      <button type="button" className="ml-4 flex items-center">
        <Icon size={17} box={17}>
          <path d="M1 2.500h15l-5.500 6V14l-3 1.500v-7z" fill="#c3c8ce" />
        </Icon>
        <span className="mt-[3px]">:0</span>
      </button>
      <Grip className="mt-3 mr-[2px] ml-[58px]" />
    </footer>
  );
}

/* ---------- window behind ---------- */

const BACK_ROWS = ['2', '', '', '', '', '', '3', '2', '2', '', '2', '2', '', '', '', '', '', '', ''];

function BackWindow() {
  return (
    <div className="flex w-[13px] shrink-0 flex-col bg-[#3a8bf8]">
      <div className="h-[21px]" />
      <div className="flex flex-1">
        <div className="flex w-[9px] flex-col border-r border-[#4d84c6] bg-[#6aaaf8]">
          <div className="h-[20px] w-[2px] bg-[#c75050]" />
          <div className="w-px flex-1 bg-white/80" />
        </div>
        <div className="flex flex-1 flex-col overflow-hidden">
          <div className="h-[455px] shrink-0 bg-gradient-to-b from-[#3a8bf8] to-[#45a0fb]" />
          <div className="h-[30px] shrink-0 border-b border-[#ccc] bg-[#ebebeb] pt-1 text-[12px] text-[#333]">v</div>
          <div className="h-[54px] shrink-0 border-b border-[#ccc] bg-[#f8f8f8]" />
          <div className="h-[38px] shrink-0 bg-[#fdfdfd] pt-[11px] text-[12px] leading-4 text-[#3d6b9c]">t</div>
          <div className="flex flex-1 flex-col bg-[#fdfdfd] pb-[10px]">
            {BACK_ROWS.map((mark, i) => (
              <div key={i} className="flex flex-1 items-center text-[11px] text-[#5a7a9c] underline">
                {mark || <><span className="h-[10px] w-px bg-[#8c5b9b]" /><span className="ml-[2px] h-[5px] w-px bg-[#f3b877]" /></>}
              </div>
            ))}
          </div>
        </div>
      </div>
    </div>
  );
}

function Annotation() {
  return (
    <svg className="pointer-events-none absolute inset-0 h-full w-full" fill="#ed1c24" aria-hidden="true">
      <text x="702" y="549" fontSize="24" fontWeight="700" fontFamily="Open Sans, Noto Sans, sans-serif">Change Detail Number</text>
      <path d="M832 691L988 542L1114 514M988 542L1167 678" fill="none" stroke="#ed1c24" strokeWidth="3" strokeLinecap="round" />
    </svg>
  );
}

export default function App() {
  return (
    <div className="relative flex h-screen overflow-hidden font-['Noto_Sans','Open_Sans',sans-serif]">
      <div className="flex min-w-0 flex-1 flex-col border-t border-r border-[#4d84c6] bg-[#6aaaf8] pr-[7px] pb-[5px] pl-2">
        <Header />
        <Ribbon />
        <div className="flex min-h-0 flex-1 bg-[#ededf0]">
          <PropertiesPanel />
          <DrawingArea />
          <ProjectBrowser />
        </div>
        <StatusBar />
      </div>
      <BackWindow />
      <Annotation />
    </div>
  );
}
